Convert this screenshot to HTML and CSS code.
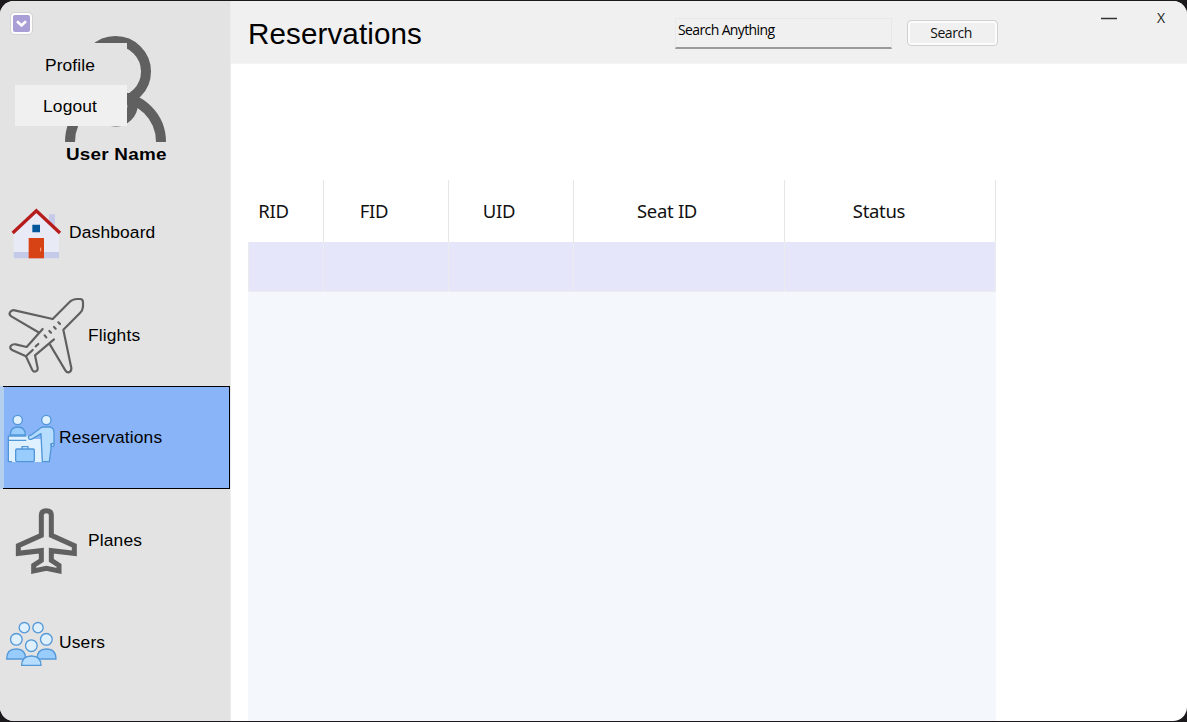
FILE: index.html
```html
<!DOCTYPE html>
<html lang="en">
<head>
<meta charset="utf-8">
<title>Reservations</title>
<link rel="stylesheet" href="styles.css">
</head>
<body>
<div class="window">
  <aside class="sidebar">
    <div class="account">
      <svg class="avatar" width="104" height="107" viewBox="64 35 104 107" fill="none" stroke="#606060" stroke-width="10">
        <circle cx="115.5" cy="71.5" r="30.5"/>
        <circle cx="115.5" cy="142" r="45.5"/>
        <path d="M98 103A17.5 18 0 0 0 133 104"/>
        <path d="M126 96l8 6-6 8z" fill="#606060" stroke="none"/>
      </svg>
      <strong class="user-name">User Name</strong>
      <button class="toggle" aria-label="Account menu">
        <svg width="17" height="17" viewBox="0 0 17 17"><path d="M4 6.2l4.5 4.2L13 6.2" fill="none" stroke="#fff" stroke-width="2.6"/></svg>
      </button>
      <div class="menu">
        <span class="menu-item">Profile</span>
        <span class="menu-item menu-item-hover">Logout</span>
      </div>
    </div>
    <nav class="nav">
      <a class="nav-item tall">
        <svg width="69" height="102" viewBox="0 -42 207 306">
          <path fill="#c5cae9" d="M147 58h18v50h-18z"/>
          <path fill="#e8eaf6" d="M109 50L177 112V190H41V112z"/>
          <path fill="#c5cae9" d="M41 171h136v19H41z"/>
          <path fill="#d84315" d="M86 129h46v61H86z"/>
          <path fill="#01579b" d="M97 89h23v23H97z"/>
          <path d="M38 114L109 47l71 67" fill="none" stroke="#b71c1c" stroke-width="10"/>
          <path d="M122 158v11" stroke="#ffab91" stroke-width="3"/>
        </svg>
        <span>Dashboard</span>
      </a>
      <a class="nav-item">
        <svg width="88" height="102" viewBox="0 267 264 306" fill="none" stroke="#606060" stroke-width="6.5" stroke-linejoin="round" stroke-linecap="round">
          <path d="M158 372L208 322Q217 312 232 312H240Q249 312 249 322V335Q248 347 240 354L190 404L214 519Q215 528 207 532Q201 534 196 526L150 449"/>
          <path d="M158 372L44 346Q35 344 30 352Q26 359 34 364L114 411"/>
          <path d="M128 402L80 456L47 448Q37 447 32 453Q28 459 36 465L78 484L97 525Q101 532 108 529Q114 526 113 519L105 481L162 433"/>
          <path d="M78 484L98 465M107 454L115 447M134 421L139 427M148 408L153 413M162 396L167 401M175 382L180 387"/>
        </svg>
        <span>Flights</span>
      </a>
      <a class="nav-item tall active">
        <svg width="59" height="102" viewBox="0 18 177 306" stroke="#5096d8" stroke-width="4" stroke-linejoin="round">
          <circle cx="53" cy="117" r="14" fill="#dff0fe"/>
          <path fill="#98ccfd" d="M31 162Q31 138 53 138Q76 138 76 162z"/>
          <path fill="#dff0fe" stroke="none" d="M24 164H95V174H126V243H24z"/>
          <path fill="none" d="M79 165H25V242H36M25 178H79"/>
          <path fill="none" d="M66 204v-7h18v7"/>
          <rect x="47" y="204" width="56" height="38" rx="4" fill="#98ccfd"/>
          <circle cx="139" cy="117" r="14" fill="#dff0fe"/>
          <path fill="#b6dcfe" d="M94 162L119 143Q123 138 132 138H150Q162 140 162 155V188H153V203L148 242H127L123 158L94 175Q85 176 85 168Q87 162 94 162z"/>
          <circle cx="158" cy="192" r="4.5" fill="#dff0fe"/>
        </svg>
        <span>Reservations</span>
      </a>
      <a class="nav-item">
        <svg width="88" height="102" viewBox="0 -3 264 306">
          <path d="M124 75Q124 62 139 62Q154 62 154 75V136L223 167V190L154 182V211L177 226V243L139 235L101 243V226L124 211V182L55 190V167L124 136z" fill="none" stroke="#606060" stroke-width="15"/>
        </svg>
        <span>Planes</span>
      </a>
      <a class="nav-item tall">
        <svg width="59" height="102" viewBox="0 303 177 306" stroke="#5599d8" stroke-width="4">
          <g fill="#dff0fe"><circle cx="73" cy="413" r="15.5"/><circle cx="114" cy="413" r="15.5"/><circle cx="49" cy="448" r="17.5"/><circle cx="139" cy="448" r="17.5"/></g>
          <path fill="#98ccfd" d="M20 507Q20 477 48 477Q77 477 77 507zM111 507Q111 477 139 477Q168 477 168 507z"/>
          <path fill="#b6dcfe" d="M65 526Q65 498 94 498Q123 498 123 526z"/>
          <circle cx="94" cy="467" r="17.5" fill="#dff0fe"/>
        </svg>
        <span>Users</span>
      </a>
    </nav>
  </aside>
  <main class="main">
    <header class="header">
      <h1 class="title">Reservations</h1>
      <div class="search-box"><span>Search Anything</span></div>
      <button class="search-button"><span>Search</span></button>
      <div class="window-buttons">
        <svg width="16" height="14" viewBox="0 0 16 14"><path d="M0 8.5h16" stroke="#333" stroke-width="1.3"/></svg>
        <span class="close">X</span>
      </div>
    </header>
    <section class="table">
      <div class="row head">
        <div class="cell">RID</div><div class="cell">FID</div><div class="cell">UID</div><div class="cell">Seat ID</div><div class="cell">Status</div>
      </div>
      <div class="row data">
        <div class="cell"></div><div class="cell"></div><div class="cell"></div><div class="cell"></div><div class="cell"></div>
      </div>
    </section>
  </main>
</div>
</body>
</html>
```
FILE: styles.css
```css
* { box-sizing: border-box; }
body {
  margin: 0;
  height: 722px;
  padding: 1px 0;
  overflow: hidden;
  background: #1c191c;
  font-family: "Liberation Sans", Arial, sans-serif;
  color: #000;
}
.window {
  display: flex;
  height: 720px;
  border-radius: 14px;
  overflow: hidden;
  background: #fff;
}
.sidebar { width: 231px; background: #e3e3e3; border-right: 1px solid #ececec; }
.account {
  position: relative;
  height: 180px;
  padding-top: 34px;
}
.avatar { display: block; margin-left: 64px; }
.user-name {
  display: block;
  width: 100px;
  margin: 2px 0 0 66px;
  font-size: 17px;
  line-height: 22px;
  letter-spacing: 0.2px;
  white-space: nowrap;
  transform: scaleX(1.11);
  transform-origin: left;
}
.toggle {
  position: absolute;
  left: 11px;
  top: 12px;
  width: 21px;
  height: 21px;
  padding: 0;
  display: flex;
  border: 2px solid #fdfdfd;
  border-radius: 4px;
  background: #a99fd6;
  box-shadow: 0 0 0 1px #d2d2d2;
}
.toggle svg { flex: none; }
.menu { position: absolute; left: 15px; top: 42px; width: 112px; }
.menu-item {
  display: flex;
  align-items: center;
  justify-content: center;
  height: 42px;
  padding: 3px 2px 0 0;
  background: #e3e3e3;
  font-size: 17.4px;
  letter-spacing: 0.1px;
}
.menu-item-hover { height: 41px; padding-top: 1px; background: #f0f0f0; }
.nav-item {
  display: flex;
  align-items: center;
  height: 102px;
  font-size: 17.4px;
  letter-spacing: 0.15px;
}
.nav-item svg { flex: none; }
.tall { height: 103px; padding-bottom: 1px; }
.active {
  background: linear-gradient(90deg, #b5d0ee 4px, #8ab4f8 4px);
  border: solid #000;
  border-width: 1px 1px 1px 0;
  padding-bottom: 0;
  border-image: linear-gradient(90deg, #b5d0ee 4px, #000 4px) 1;
}
.main { flex: 1; display: flex; flex-direction: column; }
.header {
  display: flex;
  align-items: flex-start;
  height: 63px;
  padding-left: 17px;
  background: #f0f0f0;
  border-bottom: 1px solid #f5f5f5;
}
.title {
  width: 427px;
  margin: 15px 0 0;
  font-size: 29.6px;
  line-height: 35px;
  font-weight: 400;
  letter-spacing: 0.1px;
}
.search-box {
  width: 217px;
  height: 31px;
  margin-top: 17px;
  padding: 1px 0 0 2px;
  border: 1px solid #e8e8e8;
  border-bottom: 2px solid #9a9a9a;
  font: 14px/20px "Open Sans", sans-serif;
  letter-spacing: -0.62px;
}
.search-button {
  width: 91px;
  height: 26px;
  margin: 19px 0 0 15px;
  padding: 0 3px 0 0;
  border: 1px solid #d0d0d0;
  border-radius: 4px;
  background: #f0f0f0;
  box-shadow: inset 0 0 0 2px #fcfcfc;
  font: 14px/20px "Open Sans", sans-serif;
  letter-spacing: -0.45px;
  color: #111;
}
.window-buttons { display: flex; gap: 40px; margin: 9px 0 0 103px; }
.close { font: 14px/15px "Open Sans", sans-serif; color: #222; }
.table {
  flex: 1;
  width: 748px;
  margin: 116px 0 0 17px;
  background: #f4f7fc;
}
.row { display: grid; grid-template-columns: 76px 125px 125px 211px 211px; }
.cell { border-right: 1px solid #e6e6e6; }
.head { height: 62px; background: #fff; }
.head .cell {
  display: flex;
  align-items: center;
  justify-content: center;
  padding: 0 24px 0 0;
  font: 18.5px/24px "Noto Sans", sans-serif;
  letter-spacing: -0.3px;
  color: #111;
}
.head .cell:last-child { padding-right: 22px; }
.data { height: 50px; background: #e6e6fa; border-bottom: 1px solid #ececee; border-left: 1px solid #ececee; grid-template-columns: 75px 125px 125px 211px 211px; }
.data .cell { border-right-color: #ececee; }
```
